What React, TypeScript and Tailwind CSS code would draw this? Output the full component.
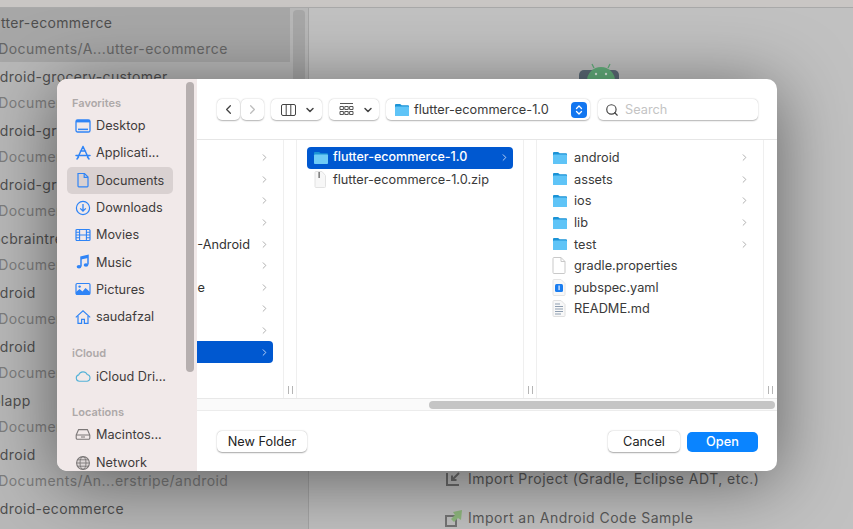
import { ChevronDown, ChevronLeft, ChevronRight, ChevronsUpDown, Search } from "lucide-react";
import type { ReactNode } from "react";

const recent = [
  ["flutter-ecommerce", "~/Documents/A...utter-ecommerce"],
  ["android-grocery-customer", "~/Documents/Android"],
  ["android-grocery-vendor", "~/Documents/Android"],
  ["android-grocery-driver", "~/Documents/Android"],
  ["ppcbraintree", "~/Documents/Android"],
  ["android", "~/Documents/Android"],
  ["android", "~/Documents/Android"],
  ["pplapp", "~/Documents/Android"],
  ["android", "~/Documents/An...erstripe/android"],
  ["android-ecommerce", "~/Documents/Android"],
];

const Folder = ({ selected }: { selected?: boolean }) => (
  <svg width="16" height="14" viewBox="0 0 16 14" className="shrink-0">
    <path d="M1 2.2C1 1.5 1.5 1 2.2 1h3.6c.5 0 .8.2 1.1.5l.7.8h6.2c.7 0 1.2.5 1.2 1.2v8.3c0 .7-.5 1.2-1.2 1.2H2.2c-.7 0-1.2-.5-1.2-1.2z" fill="#1b93d6" />
    <rect x="1" y="3.6" width="14" height="9.4" rx="1" fill={selected ? "#6fcbf6" : "#5fc4f7"} />
  </svg>
);

const ZipIcon = () => (
  <svg width="14" height="17" viewBox="0 0 14 17" className="shrink-0">
    <path d="M3 .5h6l3.5 4v11a1 1 0 0 1-1 1H3a1 1 0 0 1-1-1v-14a1 1 0 0 1 1-1z" fill="#f7f7f7" stroke="#e2e2e2" />
    <rect x="5.4" y="1" width="1.5" height="6" fill="#777777" />
  </svg>
);

const PlainFile = () => (
  <svg width="14" height="17" viewBox="0 0 14 17" className="shrink-0">
    <path d="M2 .5h7l4 4v11a1 1 0 0 1-1 1H2a1 1 0 0 1-1-1v-14a1 1 0 0 1 1-1z" fill="#fff" stroke="#c9c9c9" />
    <path d="M9 .5v4h4" fill="none" stroke="#c9c9c9" />
  </svg>
);

const YamlFile = () => (
  <svg width="14" height="17" viewBox="0 0 14 17" className="shrink-0">
    <path d="M2 .5h7l4 4v11a1 1 0 0 1-1 1H2a1 1 0 0 1-1-1v-14a1 1 0 0 1 1-1z" fill="#f8f8f8" stroke="#e4e4e4" />
    <rect x="3" y="5" width="8" height="8" rx="1.5" fill="#1a7df0" />
    <rect x="6.4" y="6.5" width="1.4" height="4.6" fill="#cfe4ff" />
  </svg>
);

const TextFile = () => (
  <svg width="14" height="17" viewBox="0 0 14 17" className="shrink-0">
    <path d="M2 .5h7l4 4v11a1 1 0 0 1-1 1H2a1 1 0 0 1-1-1v-14a1 1 0 0 1 1-1z" fill="#f8f8f8" stroke="#e0e0e0" />
    <path d="M3 4h5M3 6.5h8M3 9h8M3 11.5h8M3 14h6" stroke="#8d9db0" strokeWidth="1.2" />
  </svg>
);

// sidebar glyphs, all on a 16 x 16 box
const blue = "#2f84f6";
const sideIcons: Record<string, ReactNode> = {
  desktop: (
    <>
      <rect x="1" y="2" width="14" height="12" rx="1.6" fill="none" stroke={blue} strokeWidth="1.3" />
      <rect x="1" y="2" width="14" height="2.4" fill={blue} />
      <rect x="3" y="10.6" width="10" height="1.5" fill={blue} />
    </>
  ),
  apps: (
    <path d="M8 1.5 3 12M8 1.5 13 12M1 10.5h14M5.5 6h5M2 14l1.5-2M14 14l-1.5-2" fill="none" stroke={blue} strokeWidth="1.5" strokeLinecap="round" />
  ),
  docs: (
    <>
      <path d="M3 1.5h6.5L13 5v9a.8.8 0 0 1-.8.8H3.8A.8.8 0 0 1 3 14z" fill="none" stroke={blue} strokeWidth="1.2" />
      <path d="M9.2 1.5V5.3H13" fill="none" stroke={blue} strokeWidth="1.2" />
    </>
  ),
  downloads: (
    <>
      <circle cx="8" cy="8" r="6.6" fill="none" stroke={blue} strokeWidth="1.2" />
      <path d="M8 4v7M5.2 8.4 8 11.2l2.8-2.8" fill="none" stroke={blue} strokeWidth="1.3" />
    </>
  ),
  movies: (
    <>
      <rect x="1" y="2.5" width="14" height="11" rx="1" fill="none" stroke={blue} strokeWidth="1.2" />
      <path d="M4.6 2.5v11M11.4 2.5v11M1 8h14M1 5.2h3.6M1 10.8h3.6M11.4 5.2H15M11.4 10.8H15" stroke={blue} strokeWidth="1.1" />
    </>
  ),
  music: (
    <>
      <path d="M6 12.5V3.2L13 1.5v9" fill="none" stroke={blue} strokeWidth="1.5" />
      <path d="M6 3.2 13 1.5v2.4L6 5.6z" fill={blue} />
      <ellipse cx="4" cy="12.8" rx="2.3" ry="1.8" fill={blue} />
      <ellipse cx="11" cy="11" rx="2.3" ry="1.8" fill={blue} />
    </>
  ),
  pictures: (
    <>
      <rect x="1" y="2.5" width="14" height="11" rx="1.2" fill="none" stroke={blue} strokeWidth="1.2" />
      <path d="M1 13.5V11l3.5-3 3 2.5 3-3.5L15 11v2.5z" fill={blue} />
      <circle cx="4.6" cy="5.6" r="1.2" fill={blue} />
    </>
  ),
  home: (
    <>
      <path d="M.8 8.4 8 1.8l7.2 6.6" fill="none" stroke={blue} strokeWidth="1.2" />
      <path d="M3 7v7.4h3.6v-4h2.8v4H13V7" fill="none" stroke={blue} strokeWidth="1.2" />
    </>
  ),
  cloud: (
    <path d="M4.4 13.2A3.2 3.2 0 0 1 3.7 6.9 4.6 4.6 0 0 1 12.2 6.5 3.4 3.4 0 0 1 12.2 13.2z" fill="none" stroke="#56b3d8" strokeWidth="1.1" />
  ),
  disk: (
    <>
      <path d="M1.2 9 3.6 3.6h8.8L14.8 9v3a1.2 1.2 0 0 1-1.2 1.2H2.4A1.2 1.2 0 0 1 1.2 12z" fill="none" stroke="#7b7777" strokeWidth="1.1" />
      <path d="M1.2 9h13.6M6 11h4" stroke="#7b7777" strokeWidth="1" />
    </>
  ),
  network: (
    <>
      <circle cx="8" cy="8" r="6.4" fill="#ddd7d7" stroke="#7b7777" strokeWidth="1.1" />
      <ellipse cx="8" cy="8" rx="3" ry="6.4" fill="none" stroke="#7b7777" strokeWidth=".9" />
      <path d="M1.6 8h12.8M2.6 4.8h10.8M2.6 11.2h10.8" stroke="#7b7777" strokeWidth=".9" />
    </>
  ),
};

const SideItem = ({ icon, label, active }: { icon: string; label: string; active?: boolean }) => (
  <div className={`ml-[10px] mr-[24px] flex h-[27.3px] items-center gap-[5px] rounded-[5px] px-[8px] ${active ? "bg-[#d9d1d1]" : ""}`}>
    <svg width="16" height="16" viewBox="0 0 16 16" className="shrink-0">
      {sideIcons[icon]}
    </svg>
    <span className="whitespace-nowrap text-[12.7px] text-[#3f3c3c]">{label}</span>
  </div>
);

const SideHeading = ({ label, className }: { label: string; className: string }) => (
  <div className={`pl-[15px] text-[11px] font-semibold text-[#ada8a8] ${className}`}>{label}</div>
);

const Row = ({ icon, label, arrow }: { icon: ReactNode; label: string; arrow?: boolean }) => (
  <div className="flex h-[21.6px] items-center pl-[15px] pr-[13px]">
    <span className="flex w-[22px] shrink-0 items-center">{icon}</span>
    <span className="flex-1 text-[12.75px] text-[#3a3a3a]">{label}</span>
    {arrow && <ChevronRight size={11} className="text-[#a8a8a8]" />}
  </div>
);

const Handle = ({ className = "" }: { className?: string }) => (
  <div className={`flex items-end justify-center pb-[4px] ${className}`}>
    <div className="h-[8px] w-[5px] border-x border-[#b5b5b5]" />
  </div>
);

const ToolButton = ({ children, className }: { children: ReactNode; className: string }) => (
  <div className={`flex h-[21px] items-center rounded-[5px] bg-white shadow-[0_0.5px_1.5px_rgba(0,0,0,0.3)] ${className}`}>
    {children}
  </div>
);

export default function App() {
  return (
    <div className="relative h-[529px] w-[853px] overflow-hidden bg-[#c1c1c1] font-['Inter',sans-serif]">
      {/* IDE welcome window, dimmed behind the sheet */}
      <div className="h-[8px] border-b border-[#a9a9a9] bg-[#c9c6c4]" />
      <div className="flex h-[521px]">
        <div className="w-[290px] shrink-0 overflow-hidden bg-[#b8b8b8]">
          {recent.map(([title, path], i) => (
            <div key={i} className={`-ml-[17px] flex h-[54px] w-[330px] flex-col justify-center gap-[7px] ${i === 0 ? "bg-[#a7a7a7]" : ""}`}>
              <div className="whitespace-nowrap text-[14px] leading-[19px] tracking-[0.35px] text-[#4f4f4f]">{title}</div>
              <div className={`whitespace-nowrap text-[14px] leading-[19px] tracking-[0.45px] ${i === 0 ? "text-[#666666]" : "text-[#7d7d7d]"}`}>{path}</div>
            </div>
          ))}
        </div>
        <div className="w-[19px] shrink-0 border-r border-[#a6a6a6] bg-[#b8b8b8] pl-[3px] pt-[2px]">
          <div className="h-[300px] w-[12px] rounded-[4px] bg-[#a7a7a7]" />
        </div>
        <div className="flex min-w-0 flex-1 flex-col bg-[#c1c1c1] pl-[137px]">
          <svg width="60" height="50" viewBox="0 0 60 50" className="ml-[124px] mt-[46px] shrink-0">
            <rect x="9" y="16" width="40" height="34" rx="5" fill="#5c6b78" />
            <circle cx="31" cy="27" r="14" fill="#63b07c" />
            <path d="M24 14l-2-4M38 14l2-4" stroke="#63b07c" strokeWidth="1.3" />
            <circle cx="26" cy="20" r="1.2" fill="#dfeee3" />
            <circle cx="36" cy="20" r="1.2" fill="#dfeee3" />
          </svg>
          <div className="flex-1" />
          <div className="flex h-[39px] items-center gap-[8px] whitespace-nowrap text-[14px] tracking-[0.48px] text-[#5a5a5a]">
            <svg width="14" height="14" viewBox="0 0 14 14" className="shrink-0">
              <path d="M1 1v12h12" fill="none" stroke="#6f6f6f" strokeWidth="2" />
              <path d="M13 1 6 8M6 3.5V8h4.5" fill="none" stroke="#6f6f6f" strokeWidth="2" />
            </svg>
            Import Project (Gradle, Eclipse ADT, etc.)
          </div>
          <div className="mb-[-8px] flex h-[39px] items-center gap-[5px] whitespace-nowrap text-[14px] tracking-[0.48px] text-[#5a5a5a]">
            <svg width="18" height="18" viewBox="0 0 18 18" className="-ml-[1px] shrink-0">
              <path d="M1 7h10v10H1z" fill="none" stroke="#757575" strokeWidth="2" />
              <path d="M17 1l-1 10-3-2-4 4-3-3 4-4-2-3z" fill="#8fb87e" />
            </svg>
            Import an Android Code Sample
          </div>
        </div>
      </div>

      {/* open panel */}
      <div className="absolute left-[57px] top-[79px] flex h-[392px] w-[720px] overflow-hidden rounded-[10px] bg-white shadow-[0_10px_70px_rgba(0,0,0,0.5)]">
        <div className="relative w-[140px] shrink-0 bg-[#f1e9e9] pt-[17px]">
          <SideHeading label="Favorites" className="mb-[2px] h-[14px] leading-[14px]" />
          <SideItem icon="desktop" label="Desktop" />
          <SideItem icon="apps" label="Applicati..." />
          <SideItem icon="docs" label="Documents" active />
          <SideItem icon="downloads" label="Downloads" />
          <SideItem icon="movies" label="Movies" />
          <SideItem icon="music" label="Music" />
          <SideItem icon="pictures" label="Pictures" />
          <SideItem icon="home" label="saudafzal" />
          <SideHeading label="iCloud" className="mt-[16px] mb-[2px] h-[14px] leading-[14px]" />
          <SideItem icon="cloud" label="iCloud Dri..." />
          <SideHeading label="Locations" className="mt-[15px] mb-[2px] h-[14px] leading-[14px]" />
          <SideItem icon="disk" label="Macintos..." />
          <div className="mt-[1px]">
            <SideItem icon="network" label="Network" />
          </div>
          <div className="absolute left-[129px] top-[3px] h-[290px] w-[8px] rounded-full bg-[#b6afaf]" />
        </div>

        <div className="flex min-w-0 flex-1 flex-col">
          <div className="flex h-[61px] shrink-0 items-center border-b border-[#e6e6e6] pl-[20px] pt-[1px]">
            <ToolButton className="w-[23px] justify-center">
              <ChevronLeft size={15} className="text-[#444444]" />
            </ToolButton>
            <ToolButton className="ml-[1px] w-[23px] justify-center">
              <ChevronRight size={15} className="text-[#bdbdbd]" />
            </ToolButton>
            <ToolButton className="ml-[7px] w-[51px] justify-between pl-[10px] pr-[6px]">
              <svg width="15" height="12" viewBox="0 0 15 12">
                <rect x="0.5" y="0.5" width="14" height="11" rx="1.5" fill="none" stroke="#444444" />
                <path d="M5.2 1v10M9.8 1v10" stroke="#444444" />
              </svg>
              <ChevronDown size={12} strokeWidth={3} className="text-[#444444]" />
            </ToolButton>
            <ToolButton className="ml-[7px] w-[50px] justify-between pl-[10px] pr-[5px]">
              <svg width="15" height="13" viewBox="0 0 15 13">
                <path d="M1 .5h13" stroke="#555555" />
                <path d="M1 3.5h3.4v3H1zM5.8 3.5h3.4v3H5.8zM10.6 3.5H14v3h-3.4zM1 8.5h3.4v3H1zM5.8 8.5h3.4v3H5.8zM10.6 8.5H14v3h-3.4z" fill="none" stroke="#555555" />
              </svg>
              <ChevronDown size={12} strokeWidth={3} className="text-[#444444]" />
            </ToolButton>
            <ToolButton className="ml-[7px] w-[204px] pl-[8px] pr-[3px]">
              <Folder />
              <span className="ml-[4px] flex-1 whitespace-nowrap text-[12.75px] text-[#3a3a3a]">flutter-ecommerce-1.0</span>
              <span className="flex h-[16px] w-[16px] items-center justify-center rounded-[4px] bg-[#1276f0]">
                <ChevronsUpDown size={12} strokeWidth={2.6} className="text-white" />
              </span>
            </ToolButton>
            <ToolButton className="ml-[8px] w-[160px] gap-[6px] pl-[7px]">
              <Search size={14} className="text-[#444444]" />
              <span className="text-[12.75px] text-[#c4c4c4]">Search</span>
            </ToolButton>
          </div>

          <div className="flex h-[259px] shrink-0 border-b border-[#e8e8e8]">
            {/* first column is scrolled, only its right end shows */}
            <div className="relative w-[86px] shrink-0 overflow-hidden pt-[7px]">
              {["", "", "", "", "-Android", "", "e", "", "", ""].map((t, i) => (
                <div key={i} className={`mr-[10px] flex h-[21.6px] items-center pr-[3px] ${i === 9 ? "rounded-r-[4px] bg-[#0058d0]" : ""}`}>
                  <span className="flex-1 whitespace-nowrap text-right text-[12.75px] text-[#333333]">
                    <span className={i === 6 ? "mr-[54px] inline-block" : "mr-[9px] inline-block"}>{t}</span>
                  </span>
                  <ChevronRight size={11} className={i === 9 ? "text-[#c9dcf6]" : "text-[#a8a8a8]"} />
                </div>
              ))}
            </div>
            <Handle className="w-[14px] shrink-0 border-x border-[#efefef]" />
            <div className="w-[226px] shrink-0 pt-[7px]">
              <div className="mx-[10px] flex h-[21.6px] items-center rounded-[4px] bg-[#0058d0] pl-[6px] pr-[3px] text-white">
                <span className="flex w-[20px] shrink-0 items-center"><Folder selected /></span>
                <span className="flex-1 text-[12.5px] font-medium">flutter-ecommerce-1.0</span>
                <ChevronRight size={11} className="text-[#c9dcf6]" />
              </div>
              <div className="mx-[10px] flex h-[21.6px] items-center pl-[6px] pr-[6px]">
                <span className="flex w-[20px] shrink-0 items-center"><ZipIcon /></span>
                <span className="text-[12.75px] text-[#3a3a3a]">flutter-ecommerce-1.0.zip</span>
              </div>
            </div>
            <Handle className="w-[14px] shrink-0 border-x border-[#efefef]" />
            <div className="w-[226px] shrink-0 pt-[7px]">
              <Row icon={<Folder />} label="android" arrow />
              <Row icon={<Folder />} label="assets" arrow />
              <Row icon={<Folder />} label="ios" arrow />
              <Row icon={<Folder />} label="lib" arrow />
              <Row icon={<Folder />} label="test" arrow />
              <Row icon={<PlainFile />} label="gradle.properties" />
              <Row icon={<YamlFile />} label="pubspec.yaml" />
              <Row icon={<TextFile />} label="README.md" />
            </div>
            <Handle className="w-[14px] shrink-0 border-l border-[#efefef]" />
          </div>

          <div className="flex h-[12px] shrink-0 items-center border-b border-[#ececec] bg-[#fafafa] pl-[232px] pr-[2px]">
            <div className="h-[8px] w-full rounded-full bg-[#c5c5c5]" />
          </div>

          <div className="flex flex-1 items-center pl-[20px] pr-[19px] pt-[1px]">
            <button className="h-[21px] w-[90px] rounded-[5px] bg-white text-[12.75px] text-[#222222] shadow-[0_0.5px_1.5px_rgba(0,0,0,0.35)]">New Folder</button>
            <div className="flex-1" />
            <button className="h-[21px] w-[72px] rounded-[5px] bg-white text-[12.75px] text-[#222222] shadow-[0_0.5px_1.5px_rgba(0,0,0,0.35)]">Cancel</button>
            <button className="ml-[7px] h-[20px] w-[71px] rounded-[5px] bg-[#0a84ff] text-[12.75px] font-medium text-white">Open</button>
          </div>
        </div>
      </div>
    </div>
  );
}
